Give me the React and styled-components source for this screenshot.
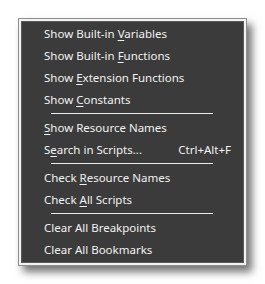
import React from 'react'
import styled, { createGlobalStyle } from 'styled-components'

const Global = createGlobalStyle`
  body {
    margin: 0;
    background: #ffffff;
    font-family: "Noto Sans", "Open Sans", sans-serif;
  }
`

const items = [
  { pre: 'Show Built-in ', key: 'V', post: 'ariables' },
  { pre: 'Show Built-in ', key: 'F', post: 'unctions' },
  { pre: 'Show ', key: 'E', post: 'xtension Functions' },
  { pre: 'Show ', key: 'C', post: 'onstants' },
  'sep',
  { pre: '', key: 'S', post: 'how Resource Names' },
  { pre: 'S', key: 'e', post: 'arch in Scripts...', shortcut: 'Ctrl+Alt+F' },
  'sep',
  { pre: 'Check ', key: 'R', post: 'esource Names' },
  { pre: 'Check ', key: 'A', post: 'll Scripts' },
  'sep',
  { pre: 'Clear All Breakpoints' },
  { pre: 'Clear All Bookmarks' },
]

const App = () => {
  return (
    <Page>
      <Global />
      <Frame>
        <List>
          {items.map((it, i) =>
            it === 'sep' ? (
              <Separator key={i} />
            ) : (
              <Item key={i}>
                <Label>
                  {it.pre}
                  {it.key && <u>{it.key}</u>}
                  {it.post}
                </Label>
                {it.shortcut && <Shortcut>{it.shortcut}</Shortcut>}
              </Item>
            )
          )}
        </List>
      </Frame>
    </Page>
  )
}

const Page = styled.div`
    width: 265px;
    height: 284px;
    padding: 18px 0 0 18px;
    box-sizing: border-box;
`;

const Frame = styled.div`
    width: 223px;
    border: 1px solid #8e8e8e;
    padding: 2px;
    background: #f2f2f2;
    box-shadow: 5px 6px 8px rgba(0, 0, 0, 0.55);
`;

const List = styled.div`
    background: #3b3b3b;
    border: 1px solid #5a5a5a;
    padding: 0 0 2px 0;
    display: flex;
    flex-direction: column;
`;

const Item = styled.div`
    height: 22px;
    display: flex;
    align-items: center;
    justify-content: space-between;
    padding: 0 12px 0 22px;
    color: #f2f2f2;
    font-size: 11.5px;
    white-space: nowrap;

    u{
        text-underline-offset: 2px;
    }
`;

const Label = styled.span``;

const Shortcut = styled.span``;

const Separator = styled.div`
    height: 6px;
    display: flex;
    align-items: center;
    padding: 0 0 0 29px;

    &::before{
        content: '';
        width: 162px;
        height: 1px;
        background: #ececec;
    }
`;

export default App
